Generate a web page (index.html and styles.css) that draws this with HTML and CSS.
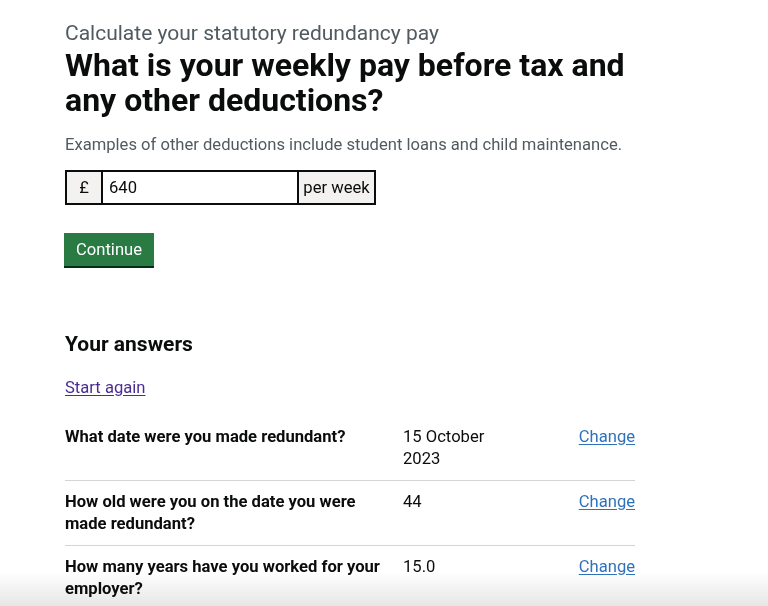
FILE: index.html
```html
<!DOCTYPE html>
<html lang="en">
<head>
<meta charset="utf-8">
<title>Calculate your statutory redundancy pay</title>
<link rel="stylesheet" href="styles.css">
</head>
<body>
<main class="page">
  <form class="question">
    <span class="caption">Calculate your statutory redundancy pay</span>
    <h1 class="heading">What is your weekly pay before tax and any other deductions?</h1>
    <p class="hint">Examples of other deductions include student loans and child maintenance.</p>
    <div class="input-group">
      <span class="prefix">£</span>
      <input class="input" type="text" value="640" aria-label="Weekly pay">
      <span class="suffix">per week</span>
    </div>
    <button class="button" type="button">Continue</button>
  </form>

  <section class="answers">
    <h2 class="answers-title">Your answers</h2>
    <a class="restart" href="#">Start again</a>
    <dl class="summary">
      <div class="row">
        <dt class="key">What date were you made redundant?</dt>
        <dd class="value">15 October 2023</dd>
        <dd class="action"><a class="change" href="#">Change</a></dd>
      </div>
      <div class="row">
        <dt class="key">How old were you on the date you were made redundant?</dt>
        <dd class="value">44</dd>
        <dd class="action"><a class="change" href="#">Change</a></dd>
      </div>
      <div class="row">
        <dt class="key">How many years have you worked for your employer?</dt>
        <dd class="value">15.0</dd>
        <dd class="action"><a class="change" href="#">Change</a></dd>
      </div>
    </dl>
  </section>
</main>
<div class="fade"></div>
</body>
</html>
```

FILE: styles.css
```css
html {
  background: #ffffff;
}

html, body {
  margin: 0;
  padding: 0;
  color: #0b0c0c;
  font-family: Roboto, "Liberation Sans", Arial, sans-serif;
  overflow: hidden;
}

.page {
  width: 570px;
  padding: 21px 0 0 65px;
}

.question {
  display: flex;
  flex-direction: column;
  align-items: flex-start;
  margin: 0;
}

.caption {
  display: block;
  font-size: 21px;
  line-height: 25px;
  color: #505a5f;
  margin-bottom: 2px;
}

.heading {
  margin: 0;
  font-size: 32px;
  line-height: 35px;
  font-weight: 700;
}

.hint {
  margin: 16px 0 0;
  font-size: 16.6px;
  line-height: 22px;
  color: #505a5f;
}

.input-group {
  display: flex;
  margin-top: 14px;
  height: 35px;
  box-sizing: border-box;
  border: 2px solid #0b0c0c;
}

.prefix,
.suffix {
  display: flex;
  align-items: center;
  justify-content: center;
  background: #f3f2f1;
  font-size: 16.6px;
  color: #0b0c0c;
}

.prefix {
  width: 34px;
  border-right: 2px solid #0b0c0c;
}

.suffix {
  width: 75px;
  border-left: 2px solid #0b0c0c;
}

.input {
  width: 194px;
  border: 0;
  padding: 0 6px;
  box-sizing: border-box;
  font-family: inherit;
  font-size: 16.6px;
  color: #0b0c0c;
  background: #ffffff;
  outline: none;
}

.button {
  margin-top: 28px;
  margin-left: -1px;
  height: 33px;
  padding: 1px 12px 0;
  border: 0;
  border-radius: 0;
  background: #2a7a44;
  box-shadow: 0 2px 0 #002d18;
  color: #ffffff;
  font-family: inherit;
  font-size: 16.6px;
  line-height: 32px;
  cursor: pointer;
}

.answers {
  margin-top: 65px;
}

.answers-title {
  margin: 0;
  font-size: 21px;
  line-height: 26px;
  font-weight: 700;
}

.restart {
  display: inline-block;
  margin-top: 20px;
  font-size: 16.6px;
  line-height: 22px;
  color: #4c2c92;
  text-decoration: underline;
  text-underline-offset: 2px;
}

.summary {
  margin: 17px 0 0;
}

.row {
  display: grid;
  grid-template-columns: 338px 120px 1fr;
  padding: 10px 0;
  border-bottom: 1px solid #d2d4d5;
  font-size: 16.6px;
  line-height: 22px;
}

.key {
  font-weight: 700;
  padding-right: 17px;
  margin: 0;
}

.value {
  margin: 0;
  padding-right: 17px;
}

.action {
  margin: 0;
  text-align: right;
}

.change {
  color: #2f72bb;
  text-decoration: underline;
  text-underline-offset: 2px;
}

.fade {
  position: fixed;
  left: 0;
  right: 0;
  bottom: 0;
  height: 34px;
  z-index: -1;
  background: linear-gradient(to bottom, rgba(236, 236, 236, 0), rgba(230, 230, 230, 1));
  pointer-events: none;
}
```
